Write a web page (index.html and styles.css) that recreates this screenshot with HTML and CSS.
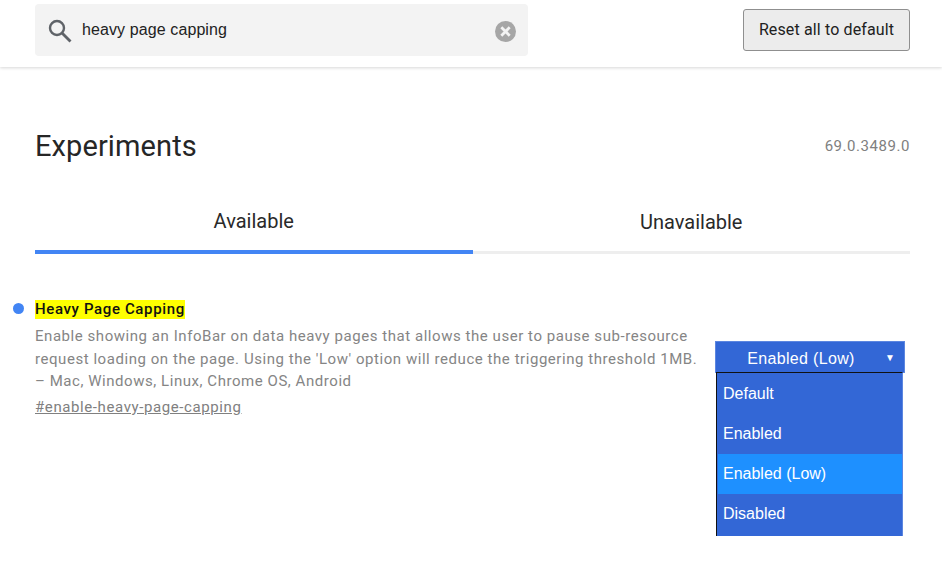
FILE: index.html
```html
<!DOCTYPE html>
<html lang="en">
<head>
  <meta charset="UTF-8">
  <title>Experiments</title>
  <link rel="stylesheet" href="styles.css">
</head>
<body>

  <div class="top-bar">
    <div class="search-box">
      <svg class="search-icon" width="24" height="24" viewBox="0 0 24 24">
        <circle cx="9" cy="9" r="7" fill="none" stroke="#5f6368" stroke-width="2.4"/>
        <path d="M14 14L22.5 22.5" fill="none" stroke="#5f6368" stroke-width="2.8"/>
      </svg>
      <span class="search-text">heavy page capping</span>
      <svg class="clear-icon" width="21" height="21" viewBox="0 0 20 20">
        <circle cx="10" cy="10" r="10" fill="#a6a6a6"/>
        <path d="M6 6L14 14M14 6L6 14" fill="none" stroke="#f3f3f3" stroke-width="2.6"/>
      </svg>
    </div>
    <button class="reset-btn">Reset all to default</button>
  </div>

  <div class="content">
    <div class="title-row">
      <h1>Experiments</h1>
      <span class="version">69.0.3489.0</span>
    </div>

    <div class="tabs">
      <div class="tab tab-active">Available</div>
      <div class="tab">Unavailable</div>
    </div>

    <div class="flag">
      <div class="flag-text">
        <div class="flag-name-row">
          <span class="dot"></span>
          <mark class="flag-name">Heavy Page Capping</mark>
        </div>
        <p class="flag-desc">Enable showing an InfoBar on data heavy pages that allows the user to pause sub-resource request loading on the page. Using the 'Low' option will reduce the triggering threshold 1MB. – Mac, Windows, Linux, Chrome OS, Android</p>
        <a class="flag-link" href="#">#enable-heavy-page-capping</a>
      </div>
      <div class="flag-select">
        <div class="select-box">Enabled (Low)<span class="arrow">▼</span></div>
        <ul class="select-menu">
          <li>Default</li>
          <li>Enabled</li>
          <li class="selected">Enabled (Low)</li>
          <li>Disabled</li>
        </ul>
      </div>
    </div>
  </div>

</body>
</html>
```

FILE: styles.css
```css
html, body {
  height: 100%;
}

body {
  margin: 0;
  background-color: #fff;
  font-family: Roboto, "Liberation Sans", sans-serif;
  color: #212121;
  overflow: hidden;
}

.top-bar {
  height: 67px;
  box-sizing: border-box;
  padding: 4px 32px 0 35px;
  display: flex;
  justify-content: space-between;
  align-items: flex-start;
  box-shadow: 0 1px 3px rgba(0, 0, 0, 0.16);
}

.search-box {
  width: 493px;
  height: 52px;
  box-sizing: border-box;
  padding: 0 12px 0 13px;
  display: flex;
  align-items: center;
  background-color: #f3f3f3;
  border-radius: 4px;
}

.search-icon {
  flex: none;
  margin-top: 2px;
}

.search-text {
  flex: 1;
  margin-left: 10px;
  font-family: "Liberation Sans", Arial, sans-serif;
  font-size: 16px;
  letter-spacing: 0.1px;
  color: #222;
}

.clear-icon {
  flex: none;
  margin-top: 2px;
}

.reset-btn {
  width: 167px;
  height: 42px;
  margin-top: 5px;
  padding: 0 0 2px;
  background-color: #ececec;
  border: 1px solid #8f8f8f;
  border-radius: 3px;
  font-family: Roboto, sans-serif;
  font-size: 16px;
  letter-spacing: 0.13px;
  color: #212121;
}

.content {
  padding: 0 32px 0 35px;
}

.title-row {
  display: flex;
  justify-content: space-between;
  align-items: center;
  margin-top: 60px;
  height: 38px;
}

h1 {
  margin: 0;
  font-size: 29px;
  font-weight: 400;
  letter-spacing: 0.1px;
  color: #262626;
}

.version {
  font-size: 15px;
  letter-spacing: 0.55px;
  color: #808080;
}

.tabs {
  display: flex;
  margin-top: 36px;
  height: 53px;
}

.tab {
  flex: 1;
  box-sizing: border-box;
  padding-top: 8px;
  text-align: center;
  font-size: 20px;
  line-height: 26px;
  color: #2a2a2a;
  border-bottom: 3px solid #eee;
}

.tab-active {
  padding-top: 7px;
  border-bottom: 4px solid #4285f4;
}

.flag {
  position: relative;
  display: flex;
  justify-content: space-between;
  margin-top: 45px;
}

.flag-text {
  width: 668px;
}

.flag-name-row {
  position: relative;
  height: 20px;
  display: flex;
  align-items: center;
}

.dot {
  position: absolute;
  left: -22px;
  top: 4px;
  width: 11px;
  height: 11px;
  border-radius: 50%;
  background-color: #4285f4;
}

.flag-name {
  background-color: #ffff00;
  color: #111;
  font-size: 15px;
  font-weight: 500;
  line-height: 19px;
  letter-spacing: 0.63px;
}

.flag-desc {
  margin: 6px 0 0;
  font-size: 15px;
  line-height: 22.7px;
  letter-spacing: 0.55px;
  color: #858585;
}

.flag-link {
  display: inline-block;
  margin-top: 5px;
  font-size: 15px;
  letter-spacing: 0.6px;
  color: #808080;
}

.flag-select {
  width: 190px;
  margin-top: 42px;
  margin-right: 5px;
}

.select-box {
  position: relative;
  height: 32px;
  box-sizing: border-box;
  padding-right: 18px;
  text-align: center;
  background-color: #3367d6;
  border: 1px solid #5c86e0;
  color: #fff;
  font-family: "Liberation Sans", Arial, sans-serif;
  font-size: 16px;
  letter-spacing: 0.32px;
  line-height: 33px;
}

.arrow {
  position: absolute;
  right: 9px;
  top: 0;
  font-size: 10px;
  line-height: 32px;
  letter-spacing: 0;
}

.select-menu {
  position: absolute;
  left: 681px;
  top: 73px;
  width: 187px;
  height: 164px;
  box-sizing: border-box;
  margin: 0;
  padding: 1px 0 0 1px;
  list-style: none;
  background-color: #3367d6;
  border-top: 1px solid #111;
  border-left: 1px solid #111;
  border-right: 1px solid #5c86e0;
  color: #fff;
  font-family: "Liberation Sans", Arial, sans-serif;
  font-size: 16px;
}

.select-menu li {
  height: 40px;
  padding-left: 5px;
  line-height: 40px;
}

.select-menu .selected {
  background-color: #1e90ff;
}
```
